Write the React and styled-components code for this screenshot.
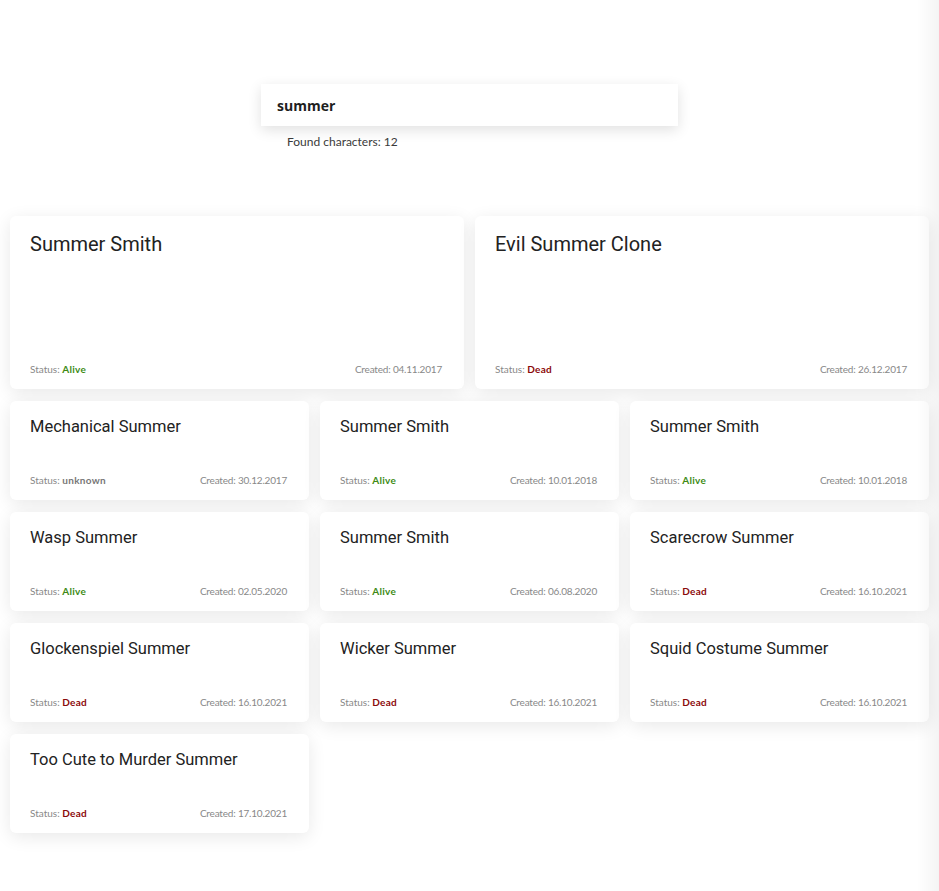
import React from "react";
import styled, { createGlobalStyle } from "styled-components";

const GlobalStyle = createGlobalStyle`
  html, body {
    margin: 0;
    padding: 0;
    background: #fff;
  }
  * {
    box-sizing: border-box;
  }
`;

const Page = styled.div`
  min-height: 891px;
  padding: 84px 10px 40px;
  font-family: "Noto Sans", sans-serif;
`;

const SearchArea = styled.div`
  width: 417px;
  margin: 0 auto;
`;

const SearchBox = styled.div`
  height: 42px;
  background: #fff;
  box-shadow: 0 4px 14px rgba(0, 0, 0, 0.12);
  display: flex;
  align-items: center;
  padding: 0 16px;
  font-family: "Open Sans", sans-serif;
  font-weight: 700;
  font-size: 14px;
  color: #1e1e1e;
`;

const Found = styled.div`
  margin: 8px 0 0 26px;
  font-family: "Lato", sans-serif;
  font-size: 12px;
  color: #3a3a3a;
`;

const Grid = styled.div`
  margin-top: 67px;
  display: grid;
  grid-template-columns: repeat(6, 1fr);
  gap: 11.5px 11px;
`;

const Card = styled.div`
  grid-column: span ${({ $big }) => ($big ? 3 : 2)};
  min-height: ${({ $big }) => ($big ? "173px" : "99.5px")};
  background: #fff;
  border-radius: 6px;
  box-shadow: 0 4px 18px rgba(0, 0, 0, 0.09);
  padding: ${({ $big }) => ($big ? "16px 22px 14px 20px" : "16px 22px 14px 20px")};
  display: flex;
  flex-direction: column;
  justify-content: space-between;
`;

const Name = styled.div`
  font-family: "Roboto", sans-serif;
  font-size: ${({ $big }) => ($big ? "20px" : "16.5px")};
  color: #222;
  line-height: 1.2;
`;

const Footer = styled.div`
  display: flex;
  justify-content: space-between;
  align-items: center;
  font-family: "Lato", sans-serif;
  font-size: 10px;
  color: #888;
`;

const Created = styled.span`
  letter-spacing: -0.2px;
`;

const statusColors = {
  Alive: "#3d8a14",
  Dead: "#8b0a0a",
  unknown: "#777",
};

const Status = styled.b`
  font-weight: 700;
  letter-spacing: 0.3px;
  color: ${({ $s }) => statusColors[$s]};
`;

const Edge = styled.div`
  position: fixed;
  top: 0;
  right: 0;
  width: 22px;
  height: 100vh;
  background: linear-gradient(to right, rgba(0, 0, 0, 0), rgba(0, 0, 0, 0.045));
  pointer-events: none;
`;

const characters = [
  { name: "Summer Smith", status: "Alive", created: "04.11.2017", big: true },
  { name: "Evil Summer Clone", status: "Dead", created: "26.12.2017", big: true },
  { name: "Mechanical Summer", status: "unknown", created: "30.12.2017" },
  { name: "Summer Smith", status: "Alive", created: "10.01.2018" },
  { name: "Summer Smith", status: "Alive", created: "10.01.2018" },
  { name: "Wasp Summer", status: "Alive", created: "02.05.2020" },
  { name: "Summer Smith", status: "Alive", created: "06.08.2020" },
  { name: "Scarecrow Summer", status: "Dead", created: "16.10.2021" },
  { name: "Glockenspiel Summer", status: "Dead", created: "16.10.2021" },
  { name: "Wicker Summer", status: "Dead", created: "16.10.2021" },
  { name: "Squid Costume Summer", status: "Dead", created: "16.10.2021" },
  { name: "Too Cute to Murder Summer", status: "Dead", created: "17.10.2021" },
];

export default function App() {
  return (
    <Page>
      <GlobalStyle />
      <SearchArea>
        <SearchBox>summer</SearchBox>
        <Found>Found characters: {characters.length}</Found>
      </SearchArea>
      <Grid>
        {characters.map((c, i) => (
          <Card key={i} $big={c.big}>
            <Name $big={c.big}>{c.name}</Name>
            <Footer>
              <span>
                Status: <Status $s={c.status}>{c.status}</Status>
              </span>
              <Created>Created: {c.created}</Created>
            </Footer>
          </Card>
        ))}
      </Grid>
      <Edge />
    </Page>
  );
}
